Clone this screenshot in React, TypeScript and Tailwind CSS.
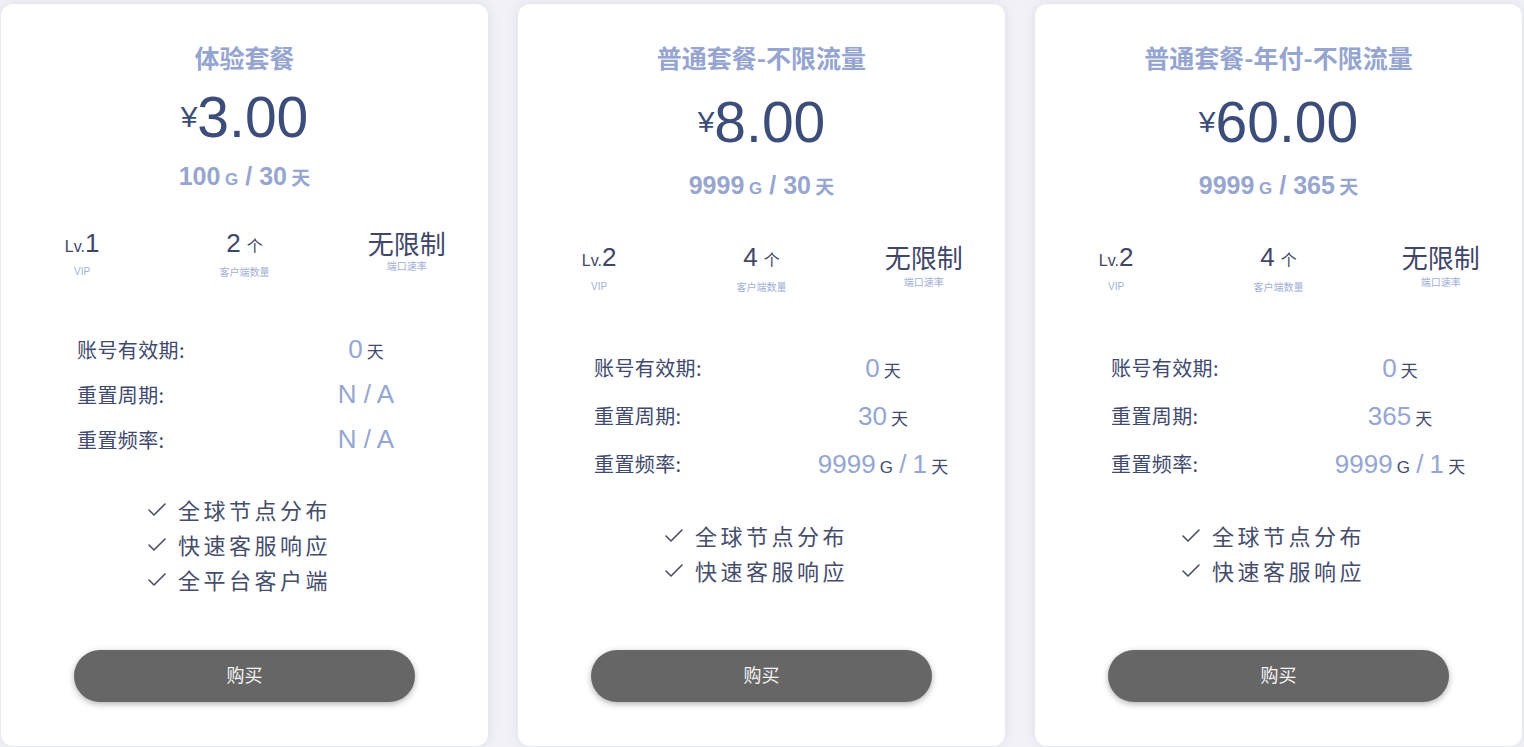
import React from "react";

const LATIN = "font-['Liberation_Sans','Noto_Sans_CJK_SC',sans-serif]";
const CJK = "font-['Noto_Sans_CJK_SC','Liberation_Sans',sans-serif]";

type Sp = { price: number; sub: number; lv: number; lbl: number; lbl3: number; det: number; row: number; feat: number };

type Plan = {
  title: string;
  price: string;
  traffic: string;
  days: string;
  lv: string;
  clients: string;
  validity: React.ReactNode;
  period: React.ReactNode;
  freq: React.ReactNode;
  features: string[];
  sp: Sp;
};

const Unit = ({ children }: { children: React.ReactNode }) => (
  <span className={`text-[17px] text-[#3f4a6e] ${CJK}`}>{children}</span>
);

const Val = ({ children }: { children: React.ReactNode }) => (
  <span className={`text-[26px] font-light text-[#95a6d1] ${LATIN}`}>{children}</span>
);

const CheckIcon = () => (
  <svg width="24" height="24" viewBox="0 0 24 24" fill="none" stroke="#4a4f68" strokeWidth="1.6" strokeLinecap="round" strokeLinejoin="round">
    <path d="M20 6 9 17l-5-5" />
  </svg>
);

const G = () => <span className={`text-[17px] text-[#3f4a6e] ${LATIN}`}>G</span>;

const Freq = () => (
  <>
    <Val>9999</Val> <G /> <span className={`mx-[2px] text-[26px] text-[#95a6d1] ${LATIN}`}>/</span> <Val>1</Val> <Unit>天</Unit>
  </>
);

const plans: Plan[] = [
  {
    title: "体验套餐",
    price: "3.00",
    traffic: "100",
    days: "30",
    lv: "1",
    clients: "2",
    validity: (
      <>
        <Val>0</Val> <Unit>天</Unit>
      </>
    ),
    period: <Val>N / A</Val>,
    freq: <Val>N / A</Val>,
    features: ["全球节点分布", "快速客服响应", "全平台客户端"],
    sp: { price: 16, sub: 15, lv: 35, lbl: 6, lbl3: 0, det: 48, row: 45, feat: 30 },
  },
  {
    title: "普通套餐-不限流量",
    price: "8.00",
    traffic: "9999",
    days: "30",
    lv: "2",
    clients: "4",
    validity: (
      <>
        <Val>0</Val> <Unit>天</Unit>
      </>
    ),
    period: (
      <>
        <Val>30</Val> <Unit>天</Unit>
      </>
    ),
    freq: <Freq />,
    features: ["全球节点分布", "快速客服响应"],
    sp: { price: 21, sub: 19, lv: 40, lbl: 7, lbl3: 2, det: 50, row: 48, feat: 30 },
  },
  {
    title: "普通套餐-年付-不限流量",
    price: "60.00",
    traffic: "9999",
    days: "365",
    lv: "2",
    clients: "4",
    validity: (
      <>
        <Val>0</Val> <Unit>天</Unit>
      </>
    ),
    period: (
      <>
        <Val>365</Val> <Unit>天</Unit>
      </>
    ),
    freq: <Freq />,
    features: ["全球节点分布", "快速客服响应"],
    sp: { price: 21, sub: 19, lv: 40, lbl: 7, lbl3: 2, det: 50, row: 48, feat: 30 },
  },
];

function Card({ p }: { p: Plan }) {
  const sp = p.sp;
  return (
    <div className="w-[487px] h-[742px] shrink-0 bg-white rounded-[12px] shadow-[0_0_12px_rgba(90,90,150,0.13)] flex flex-col pt-[37px] pb-[44px]">
      <div className={`h-[32px] leading-[32px] text-center text-[25px] font-bold text-[#95a5d0] ${CJK}`}>{p.title}</div>

      <div className="flex items-center justify-center h-[56px]" style={{ marginTop: sp.price }}>
        <span className={`text-[30px] leading-none text-[#3c4d79] ${LATIN}`}>¥</span>
        <span className={`text-[57px] leading-none text-[#3c4d79] ${LATIN}`}>{p.price}</span>
      </div>

      <div className={`h-[32px] leading-[32px] text-center font-bold text-[#97a6cf] ${LATIN}`} style={{ marginTop: sp.sub }}>
        <span className="text-[25px]">{p.traffic}</span>
        <span className="text-[17px]"> G</span>
        <span className="text-[25px]"> / {p.days}</span>
        <span className={`text-[19px] ${CJK}`}> 天</span>
      </div>

      <div className="grid grid-cols-3 items-start" style={{ marginTop: sp.lv }}>
        <div className="flex flex-col items-center">
          <div className={`h-[32px] flex items-baseline text-[#3f4668] ${LATIN}`}>
            <span className="text-[16px]">Lv.</span>
            <span className="text-[26px] leading-[32px]">{p.lv}</span>
          </div>
          <div className={`h-[14px] leading-[14px] text-[10px] text-[#a3b0d6] ${LATIN}`} style={{ marginTop: sp.lbl }}>VIP</div>
        </div>
        <div className="flex flex-col items-center">
          <div className={`h-[32px] flex items-baseline text-[#3f4668] ${LATIN}`}>
            <span className="text-[26px] leading-[32px]">{p.clients}</span>
            <span className={`text-[16px] ml-[6px] ${CJK}`}>个</span>
          </div>
          <div className={`h-[14px] leading-[14px] text-[10px] text-[#a3b0d6] ${CJK}`} style={{ marginTop: sp.lbl }}>客户端数量</div>
        </div>
        <div className="flex flex-col items-center">
          <div className={`h-[32px] leading-[32px] text-[26px] text-[#3f4668] ${CJK}`}>无限制</div>
          <div className={`h-[14px] leading-[14px] text-[10px] text-[#a3b0d6] ${CJK}`} style={{ marginTop: sp.lbl3 }}>端口速率</div>
        </div>
      </div>

      <div className="flex flex-col pl-[76px]" style={{ marginTop: sp.det }}>
        {[
          ["账号有效期:", p.validity],
          ["重置周期:", p.period],
          ["重置频率:", p.freq],
        ].map(([label, val], i) => (
          <div key={i} className="flex items-center" style={{ height: sp.row }}>
            <div className={`w-[200px] text-[20px] tracking-[0.4px] text-[#3f4a6e] ${CJK}`}>{label}</div>
            <div className="w-[178px] text-center whitespace-nowrap">{val}</div>
          </div>
        ))}
      </div>

      <div className="flex flex-col pl-[144px]" style={{ marginTop: sp.feat }}>
        {p.features.map((f) => (
          <div key={f} className="flex items-center h-[35px]">
            <CheckIcon />
            <span className={`ml-[9px] text-[22px] tracking-[3.5px] text-[#454d6b] ${CJK}`}>{f}</span>
          </div>
        ))}
      </div>

      <div className="mt-auto flex justify-center">
        <button className={`w-[341px] h-[52px] pb-[3px] rounded-full bg-[#666666] text-[#f4f4f4] text-[18px] shadow-[0_2px_6px_rgba(0,0,0,0.3)] ${CJK}`}>
          购买
        </button>
      </div>
    </div>
  );
}

export default function App() {
  return (
    <div className="w-[1524px] h-[747px] overflow-hidden bg-[#f1f1f7] flex gap-[30px] pl-[1px] pt-[4px]">
      {plans.map((p) => (
        <Card key={p.title} p={p} />
      ))}
    </div>
  );
}
